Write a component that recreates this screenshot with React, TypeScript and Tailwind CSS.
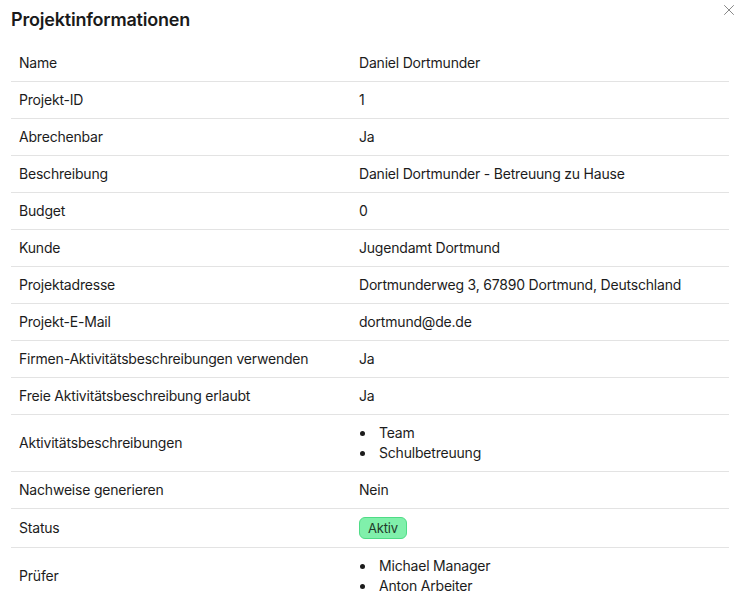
import { X } from 'lucide-react'

type Row = { label: string; value: string | string[]; badge?: boolean }

const ROWS: Row[] = [
  { label: 'Name', value: 'Daniel Dortmunder' },
  { label: 'Projekt-ID', value: '1' },
  { label: 'Abrechenbar', value: 'Ja' },
  { label: 'Beschreibung', value: 'Daniel Dortmunder - Betreuung zu Hause' },
  { label: 'Budget', value: '0' },
  { label: 'Kunde', value: 'Jugendamt Dortmund' },
  { label: 'Projektadresse', value: 'Dortmunderweg 3, 67890 Dortmund, Deutschland' },
  { label: 'Projekt-E-Mail', value: 'dortmund@de.de' },
  { label: 'Firmen-Aktivitätsbeschreibungen verwenden', value: 'Ja' },
  { label: 'Freie Aktivitätsbeschreibung erlaubt', value: 'Ja' },
  { label: 'Aktivitätsbeschreibungen', value: ['Team', 'Schulbetreuung'] },
  { label: 'Nachweise generieren', value: 'Nein' },
  { label: 'Status', value: 'Aktiv', badge: true },
  { label: 'Prüfer', value: ['Michael Manager', 'Anton Arbeiter'] },
]

function Value({ row }: { row: Row }) {
  if (Array.isArray(row.value)) {
    return (
      <ul>
        {row.value.map((v) => (
          <li key={v} className="flex items-center">
            <span className="ml-[1px] mr-[14px] h-[5px] w-[5px] rounded-full bg-[#1c1c1c]" />
            {v}
          </li>
        ))}
      </ul>
    )
  }
  if (row.badge) {
    return (
      <span className="inline-flex h-[22px] items-center rounded-md border border-[#4fdc86] bg-[#80f0ab] px-[8px] text-[13px] text-[#1f3a2a]">
        {row.value}
      </span>
    )
  }
  return <span>{row.value}</span>
}

export default function App() {
  return (
    <div
      className="relative min-h-[597px] w-[742px] bg-white px-[11px] pt-[6px] text-[#1c1c1c] tracking-[-0.2px]"
      style={{ fontFamily: 'Inter, "Noto Sans", sans-serif' }}
    >
      <button type="button" className="absolute right-[4px] top-[1px] text-[#7a7a7a]">
        <X size={18} strokeWidth={1.2} />
      </button>
      <h2 className="text-lg font-semibold leading-7 text-[#1a1a1a]">Projektinformationen</h2>

      <div className="mt-[11px] w-[718px] text-sm leading-5">
        {ROWS.map((row) => (
          <div key={row.label} className="grid grid-cols-[348px_1fr] border-b border-[#e3e3e3]">
            <div className="flex items-center px-2 py-2">{row.label}</div>
            <div className="flex items-center py-2">
              <Value row={row} />
            </div>
          </div>
        ))}
      </div>
    </div>
  )
}
